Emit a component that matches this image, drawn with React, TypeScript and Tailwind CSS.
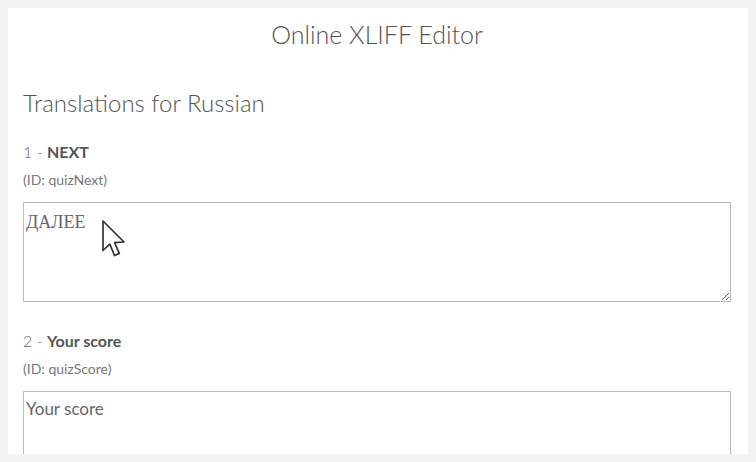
import { useState } from 'react'

const entries = [
  { n: 1, label: 'NEXT', id: 'quizNext', value: 'ДАЛЕЕ', serif: true },
  { n: 2, label: 'Your score', id: 'quizScore', value: 'Your score', serif: false },
]

function Pointer() {
  return (
    <svg width="26" height="40" viewBox="0 0 26 40" className="absolute left-[93px] top-[211px] pointer-events-none">
      <path
        d="M2 2 L2 31.5 L8.8 25.2 L13.5 36.5 L18.3 34.4 L13.6 23.6 L23 23 Z"
        fill="#fff"
        stroke="#333"
        strokeWidth="1.7"
        strokeLinejoin="round"
      />
    </svg>
  )
}

export default function App() {
  const [values, setValues] = useState(entries.map((e) => e.value))

  return (
    <div className="h-[462px] w-[756px] overflow-hidden bg-[#f2f2f2] p-2 font-['Lato','Noto_Sans',sans-serif]">
      <div className="relative h-[446px] overflow-hidden bg-white pl-[15px] pr-[17px]">
        {/* Header */}
        <h1 className="pt-[10px] text-center text-[25px] font-light leading-[32px] text-[#555]">
          Online XLIFF Editor
        </h1>

        <h2 className="mt-[38px] text-[24px] font-light leading-[30px] text-[#555]">
          Translations for Russian
        </h2>

        {entries.map((e, i) => (
          <div key={e.id} className={i === 0 ? 'mt-[24px]' : 'mt-[29px]'}>
            <div className="text-[16px] leading-[20px] text-[#666]">
              <span className="font-light">{e.n} - </span>
              <span className="font-bold text-[#555]">{e.label}</span>
            </div>
            <div className="mt-[10px] text-[14px] leading-[16px] text-[#777]">(ID: {e.id})</div>
            <textarea
              value={values[i]}
              onChange={(ev) => {
                const next = [...values]
                next[i] = ev.target.value
                setValues(next)
              }}
              className={
                'mt-[14px] block h-[100px] w-full resize border border-[#bbb] px-[2px] text-[#666] outline-none ' +
                (e.serif
                  ? "py-[8px] font-['Liberation_Serif',serif] text-[18px] leading-[22px]"
                  : "py-[6px] font-['Lato',sans-serif] text-[17px] leading-[22px]")
              }
            />
          </div>
        ))}

        <Pointer />
      </div>
    </div>
  )
}
